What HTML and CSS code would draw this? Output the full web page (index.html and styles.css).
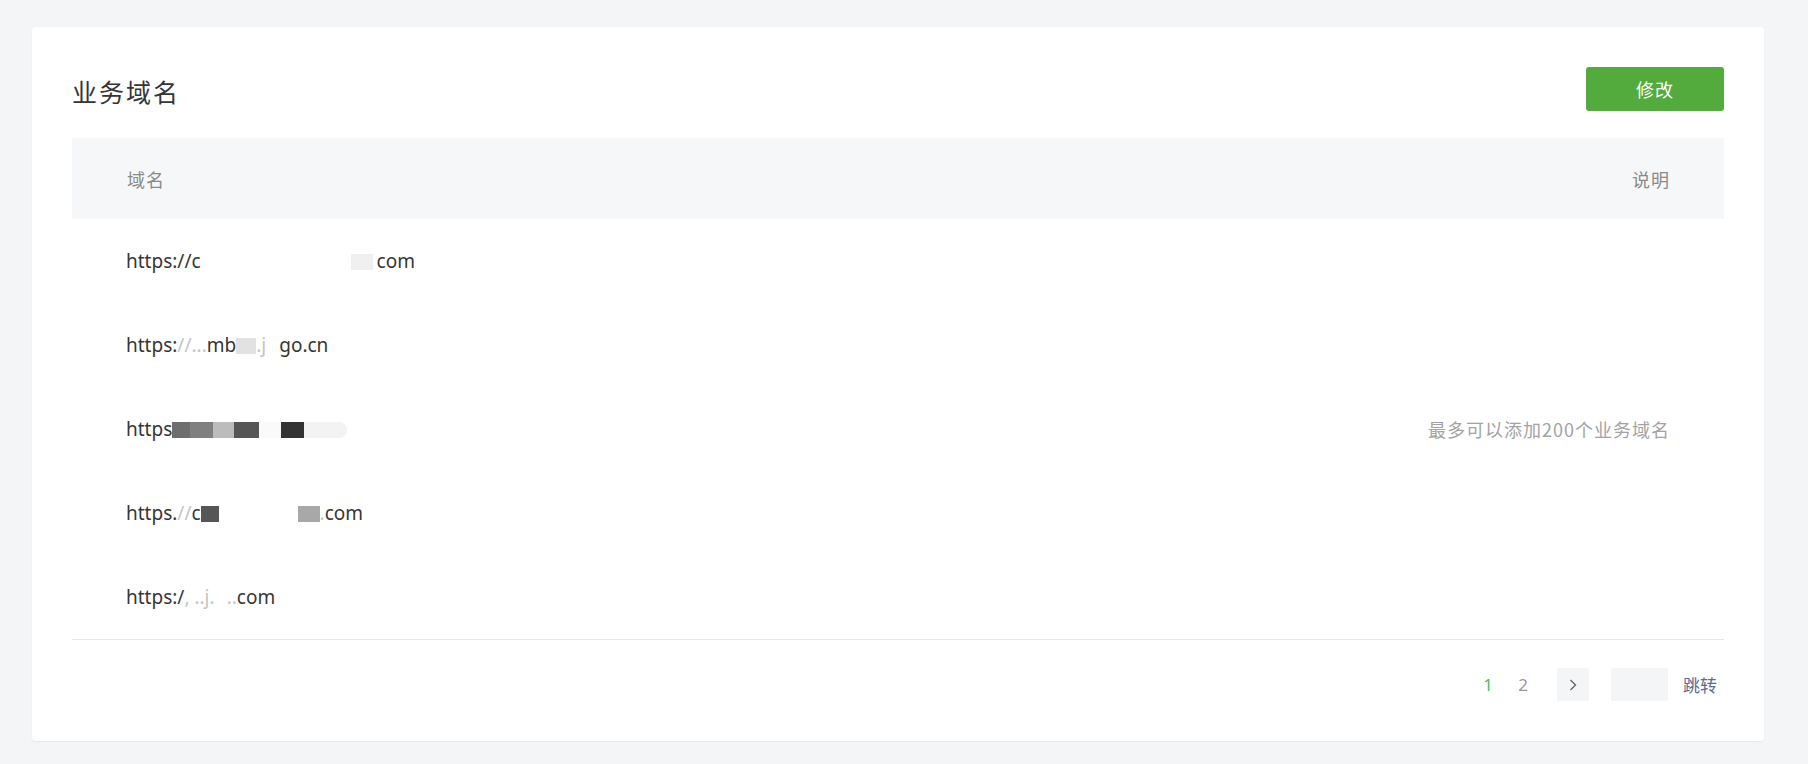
FILE: index.html
```html
<!DOCTYPE html>
<html>
	<head>
		<meta charset="UTF-8">
		<title>业务域名</title>
		<link rel="stylesheet" href="styles.css">
	</head>
	<body>
		<div class="card">
			<div class="card-head">
				<h2 class="card-title">业务域名</h2>
				<a class="btn-primary" href="javascript:;">修改</a>
			</div>
			<div class="table-wrap">
				<table class="domain-table">
					<thead>
						<tr>
							<th class="col-name">域名</th>
							<th class="col-desc">说明</th>
						</tr>
					</thead>
					<tbody>
						<tr>
							<td class="url">https://c<span class="gap g150"></span><span class="blk b-lt w22"></span><span class="gap g4"></span>com</td>
							<td class="desc" rowspan="5">最多可以添加200个业务域名</td>
						</tr>
						<tr>
							<td class="url">https:<span class="faint">//...</span>mb<span class="blk b-lt2 w20"></span><span class="faint">.j</span><span class="gap g6"></span>go.cn</td>
						</tr>
						<tr>
							<td class="url">https<span class="blk b1 w18"></span><span class="blk b2 w23"></span><span class="blk b3 w21"></span><span class="blk b4 w25"></span><span class="blk b5 w22"></span><span class="blk b6 w23"></span><span class="blk b7 w43 round"></span></td>
						</tr>
						<tr>
							<td class="url">https.<span class="faint">//</span>c<span class="blk b4 w18"></span><span class="gap g90"></span><span class="blk b8 w22"></span><span class="faint">.</span>com</td>
						</tr>
						<tr>
							<td class="url">https:/<span class="faint">, ..j.</span><span class="gap g12"></span><span class="faint">..</span>com</td>
						</tr>
					</tbody>
				</table>
			</div>
			<div class="pager">
				<span class="page-num current">1</span>
				<span class="page-num">2</span>
				<a class="page-next" href="javascript:;">
					<svg width="12" height="14" viewBox="0 0 12 14"><path d="M3.5 2 L8.5 7 L3.5 12" fill="none" stroke="#666" stroke-width="1.4"/></svg>
				</a>
				<input class="page-input" type="text">
				<a class="page-jump" href="javascript:;">跳转</a>
			</div>
		</div>
	</body>
</html>
```

FILE: styles.css
```css
*{
	margin: 0;
	padding: 0;
	box-sizing: border-box;
}
body{
	background: #f4f5f7;
	font-family: "Noto Sans", "Noto Sans CJK SC", sans-serif;
	color: #333;
	padding: 27px 44px 23px 32px;
}
.card{
	background: #fff;
	border-radius: 4px;
	box-shadow: 0 1px 2px rgba(0,0,0,0.06);
	padding: 40px;
}
.card-head{
	display: flex;
	justify-content: space-between;
	align-items: center;
	height: 44px;
}
.card-title{
	font-family: "Noto Sans CJK SC", sans-serif;
	font-size: 25px;
	font-weight: normal;
	letter-spacing: 2px;
	color: #353535;
	margin-top: 3px;
}
.btn-primary{
	display: block;
	width: 138px;
	height: 44px;
	line-height: 44px;
	text-align: center;
	background: #52ab3c;
	color: #fff;
	font-family: "Noto Sans CJK SC", sans-serif;
	font-size: 18px;
	letter-spacing: 1px;
	text-decoration: none;
	border-radius: 3px;
}
.table-wrap{
	margin-top: 27px;
	border-bottom: 1px solid #e7e7e7;
}
.domain-table{
	width: 100%;
	border-collapse: collapse;
}
.domain-table th{
	height: 81px;
	background: #f6f7f9;
	font-family: "Noto Sans CJK SC", sans-serif;
	font-size: 18px;
	font-weight: normal;
	letter-spacing: 1px;
	color: #8a8a8a;
}
.col-name{
	text-align: left;
	padding-left: 55px;
}
.col-desc{
	text-align: right;
	padding-right: 54px;
}
.domain-table td{
	height: 84px;
}
.url{
	padding-left: 54px;
	font-size: 19px;
	color: #363636;
	white-space: nowrap;
}
.desc{
	text-align: right;
	padding-right: 54px;
	font-family: "Noto Sans CJK SC", sans-serif;
	font-size: 18px;
	letter-spacing: 1px;
	color: #a3a3a3;
	vertical-align: middle;
}
.gap, .blk{
	display: inline-block;
	height: 16px;
	vertical-align: -2px;
}
.g4{ width: 4px; }
.g6{ width: 13px; }
.g12{ width: 12px; }
.g90{ width: 79px; }
.g150{ width: 150px; }
.w18{ width: 18px; }
.w20{ width: 20px; }
.w21{ width: 21px; }
.w22{ width: 22px; }
.w23{ width: 23px; }
.w25{ width: 25px; }
.w43{ width: 43px; }
.b1{ background: #6e6e6e; }
.b2{ background: #808080; }
.b3{ background: #bcbcbc; }
.b4{ background: #565656; }
.b5{ background: #fafafa; }
.b6{ background: #333; }
.b7{ background: #f3f3f3; }
.b8{ background: #a8a8a8; }
.b-lt{ background: #f0f0f0; }
.b-lt2{ background: #e2e2e2; }
.round{ border-radius: 0 8px 8px 0; }
.faint{
	color: #c4c4c4;
}
.pager{
	display: flex;
	justify-content: flex-end;
	align-items: center;
	margin-top: 28px;
	padding-right: 7px;
	height: 33px;
	font-family: "Noto Sans", "Noto Sans CJK SC", sans-serif;
	font-size: 17px;
}
.page-num{
	width: 30px;
	text-align: center;
	color: #9a9a9a;
	margin-left: 5px;
}
.page-num.current{
	color: #4cbf66;
}
.page-next{
	display: flex;
	align-items: center;
	justify-content: center;
	width: 32px;
	height: 33px;
	background: #f4f5f7;
	border-radius: 2px;
	margin-left: 19px;
}
.page-input{
	width: 57px;
	height: 33px;
	border: none;
	background: #f4f5f7;
	border-radius: 2px;
	margin-left: 22px;
	outline: none;
}
.page-jump{
	font-family: "Noto Sans CJK SC", sans-serif;
	color: #576b95;
	text-decoration: none;
	margin-left: 15px;
}
```
